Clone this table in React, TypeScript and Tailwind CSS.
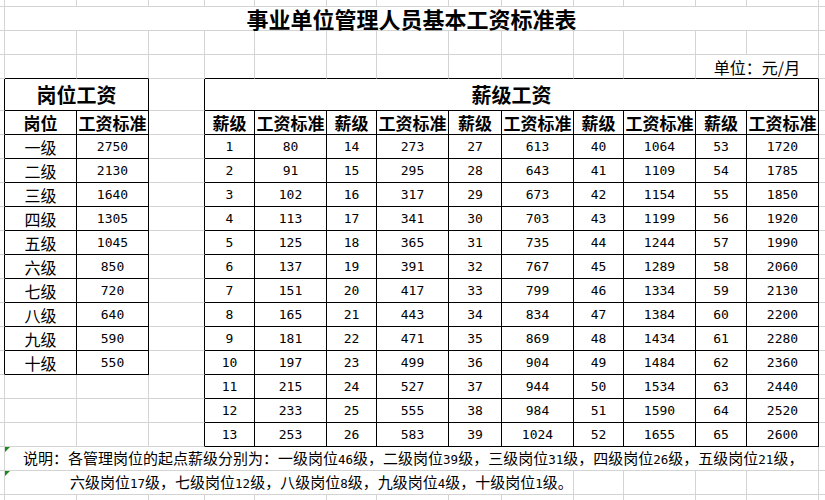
import React from "react"

type CellSpec = {
  span?: number
  text?: React.ReactNode
  kind?: "title" | "head" | "colhead" | "cn" | "num" | "unit" | "note1" | "note2"
}

const leftRows: [string, string][] = [
  ["一级", "2750"],
  ["二级", "2130"],
  ["三级", "1640"],
  ["四级", "1305"],
  ["五级", "1045"],
  ["六级", "850"],
  ["七级", "720"],
  ["八级", "640"],
  ["九级", "590"],
  ["十级", "550"],
]

const pay = [
  [80, 91, 102, 113, 125, 137, 151, 165, 181, 197, 215, 233, 253],
  [273, 295, 317, 341, 365, 391, 417, 443, 471, 499, 527, 555, 583],
  [613, 643, 673, 703, 735, 767, 799, 834, 869, 904, 944, 984, 1024],
  [1064, 1109, 1154, 1199, 1244, 1289, 1334, 1384, 1434, 1484, 1534, 1590, 1655],
  [1720, 1785, 1850, 1920, 1990, 2060, 2130, 2200, 2280, 2360, 2440, 2520, 2600],
]

const spanClass: Record<number, string> = {
  1: "col-span-1",
  2: "col-span-2",
  9: "col-span-9",
  10: "col-span-10",
  13: "col-span-13",
}

// black lines of the two bordered tables, everything else is sheet gridline
function rightBlack(row: number, colEnd: number) {
  if (colEnd <= 2 && row >= 4 && row <= 15) return true
  if (colEnd >= 3 && colEnd <= 13 && row >= 4 && row <= 18) return true
  return false
}

function bottomBlack(row: number, colStart: number) {
  if (colStart >= 1 && colStart <= 2 && row >= 3 && row <= 15) return true
  if (colStart >= 4 && colStart <= 13 && row >= 3 && row <= 18) return true
  return false
}

// half-width digits inside the note text
function Note({ s }: { s: string }) {
  const parts = s.split(/(\d+)/)
  return (
    <span>
      {parts.map((p, i) =>
        /^\d+$/.test(p) ? (
          <span key={i} className="font-['DejaVu_Sans_Mono'] text-[12.5px]">
            {p}
          </span>
        ) : (
          p
        )
      )}
    </span>
  )
}

function empty(n: number): CellSpec[] {
  return Array.from({ length: n }, () => ({}))
}

function buildRows(): CellSpec[][] {
  const rows: CellSpec[][] = []
  rows.push(empty(15))
  rows.push([{}, { span: 13, text: "事业单位管理人员基本工资标准表", kind: "title" }, {}])
  rows.push(empty(15))
  rows.push([...empty(12), { span: 2, text: "单位：元/月", kind: "unit" }, {}])
  rows.push([
    {},
    { span: 2, text: "岗位工资", kind: "head" },
    {},
    { span: 10, text: "薪级工资", kind: "head" },
    {},
  ])
  const colHead: CellSpec[] = [{}, { text: "岗位", kind: "colhead" }, { text: "工资标准", kind: "colhead" }, {}]
  for (let k = 0; k < 5; k++) {
    colHead.push({ text: "薪级", kind: "colhead" }, { text: "工资标准", kind: "colhead" })
  }
  colHead.push({})
  rows.push(colHead)
  for (let i = 0; i < 13; i++) {
    const r: CellSpec[] = [{}]
    if (i < leftRows.length) {
      r.push({ text: leftRows[i][0], kind: "cn" }, { text: leftRows[i][1], kind: "num" })
    } else {
      r.push({}, {})
    }
    r.push({})
    for (let k = 0; k < 5; k++) {
      r.push({ text: String(k * 13 + i + 1), kind: "num" }, { text: String(pay[k][i]), kind: "num" })
    }
    r.push({})
    rows.push(r)
  }
  rows.push([
    {},
    {
      span: 13,
      text: "说明：各管理岗位的起点薪级分别为：一级岗位46级，二级岗位39级，三级岗位31级，四级岗位26级，五级岗位21级，",
      kind: "note1",
    },
    {},
  ])
  rows.push([
    {},
    { span: 9, text: "六级岗位17级，七级岗位12级，八级岗位8级，九级岗位4级，十级岗位1级。", kind: "note2" },
    ...empty(5),
  ])
  rows.push(empty(15))
  return rows
}

const kindClass: Record<string, string> = {
  title: "justify-center items-end pb-[1px] text-[22px] font-bold",
  head: "justify-center text-[20px] font-bold",
  colhead: "justify-center text-[17px] font-bold",
  cn: "justify-center text-[16px]",
  num: "justify-center font-['DejaVu_Sans_Mono'] text-[13px]",
  unit: "justify-center text-[16px]",
  note1: "justify-start pl-[18px] text-[15px]",
  note2: "justify-start pl-[65px] text-[15px]",
}

export default function App() {
  const rows = buildRows()
  const cells: React.ReactNode[] = []

  rows.forEach((row, r) => {
    let col = 0
    row.forEach((cell, j) => {
      const span = cell.span ?? 1
      const start = col
      const end = col + span - 1
      col += span
      const rb = rightBlack(r, end) ? "border-r-black" : "border-r-[#d4d4d4]"
      const bb = bottomBlack(r, start) ? "border-b-black" : "border-b-[#d4d4d4]"
      const isNote = cell.kind === "note1" || cell.kind === "note2"
      cells.push(
        <div
          key={`${r}-${j}`}
          className={`relative flex items-center whitespace-nowrap leading-none border-r border-b ${rb} ${bb} ${spanClass[span]} ${
            cell.kind ? kindClass[cell.kind] : ""
          }`}
        >
          {isNote && (
            <div className="absolute left-0 top-0 w-0 h-0 border-t-[5px] border-r-[5px] border-t-[#1a8a1a] border-r-transparent" />
          )}
          {isNote ? <Note s={String(cell.text)} /> : cell.text}
        </div>
      )
    })
  })

  return (
    <div className="w-[825px] h-[500px] overflow-hidden bg-white text-black font-['Noto_Sans_CJK_SC',sans-serif]">
      <div className="grid grid-cols-[5px_72px_72px_56px_50px_72px_50px_72px_53px_72px_50px_72px_51px_72px_60px] grid-rows-[7px_24px_24px_24px_32px] auto-rows-[24px]">
        {cells}
      </div>
    </div>
  )
}
